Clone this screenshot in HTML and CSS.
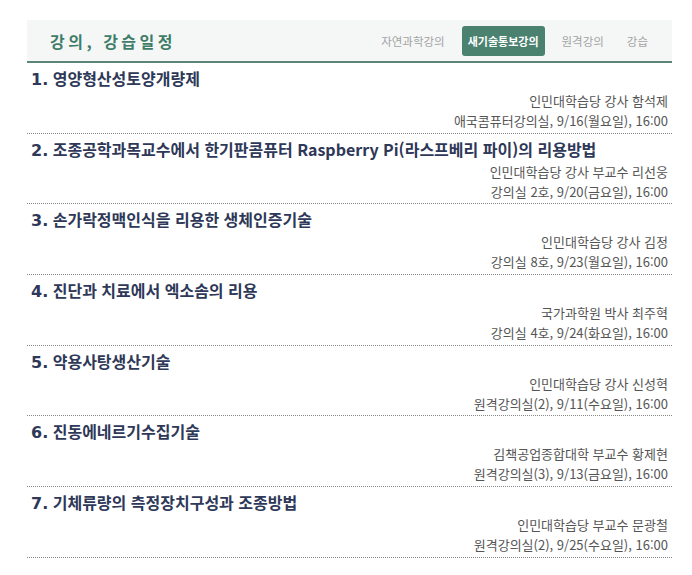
FILE: index.html
```html
<!DOCTYPE html>
<html lang="ko">
<head>
    <meta charset="UTF-8">
    <title>강의, 강습일정</title>
    <link rel="stylesheet" href="styles.css">
</head>
<body>

<div class="schedule">
    <div class="schedule-head">
        <h2>강의, 강습일정</h2>
        <ul class="tabs">
            <li>자연과학강의</li>
            <li class="active">새기술통보강의</li>
            <li>원격강의</li>
            <li>강습</li>
        </ul>
    </div>

    <div class="item">
        <div class="item-title"><b>1.</b> 영양형산성토양개량제</div>
        <div class="item-info">인민대학습당 강사 함석제</div>
        <div class="item-info">애국콤퓨터강의실, 9/16(월요일), 16:00</div>
    </div>
    <div class="item">
        <div class="item-title"><b>2.</b> 조종공학과목교수에서 한기판콤퓨터 Raspberry Pi(라스프베리 파이)의 리용방법</div>
        <div class="item-info">인민대학습당 강사 부교수 리선웅</div>
        <div class="item-info">강의실 2호, 9/20(금요일), 16:00</div>
    </div>
    <div class="item">
        <div class="item-title"><b>3.</b> 손가락정맥인식을 리용한 생체인증기술</div>
        <div class="item-info">인민대학습당 강사 김정</div>
        <div class="item-info">강의실 8호, 9/23(월요일), 16:00</div>
    </div>
    <div class="item">
        <div class="item-title"><b>4.</b> 진단과 치료에서 엑소솜의 리용</div>
        <div class="item-info">국가과학원 박사 최주혁</div>
        <div class="item-info">강의실 4호, 9/24(화요일), 16:00</div>
    </div>
    <div class="item">
        <div class="item-title"><b>5.</b> 약용사탕생산기술</div>
        <div class="item-info">인민대학습당 강사 신성혁</div>
        <div class="item-info">원격강의실(2), 9/11(수요일), 16:00</div>
    </div>
    <div class="item">
        <div class="item-title"><b>6.</b> 진동에네르기수집기술</div>
        <div class="item-info">김책공업종합대학 부교수 황제현</div>
        <div class="item-info">원격강의실(3), 9/13(금요일), 16:00</div>
    </div>
    <div class="item">
        <div class="item-title"><b>7.</b> 기체류량의 측정장치구성과 조종방법</div>
        <div class="item-info">인민대학습당 부교수 문광철</div>
        <div class="item-info">원격강의실(2), 9/25(수요일), 16:00</div>
    </div>
</div>

</body>
</html>
```

FILE: styles.css
```css
body {
    margin: 0;
    font-family: "Noto Sans CJK KR", "DejaVu Sans", sans-serif;
    background-color: #ffffff;
    color: #333;
}
.schedule {
    width: 645px;
    margin: 20px 0 0 27px;
}
.schedule-head {
    display: flex;
    align-items: center;
    justify-content: space-between;
    height: 41px;
    padding: 0 18px 0 23px;
    background-color: #f5f7f7;
    border-bottom: 2px solid #5c8477;
}
.schedule-head h2 {
    margin: 0;
    font-size: 16px;
    letter-spacing: 3.5px;
    color: #3f7d69;
}
.tabs {
    display: flex;
    gap: 11px;
    margin: 0;
    padding: 0;
    list-style: none;
}
.tabs li {
    height: 30px;
    line-height: 30px;
    padding: 0 6px;
    font-size: 11.5px;
    color: #a3a3a3;
    border-radius: 3px;
}
.tabs li.active {
    font-size: 11px;
    background-color: #4b826f;
    color: #ffffff;
    font-weight: bold;
}
.item {
    height: 63.67px;
    padding: 4px 4px 2px 4px;
    border-bottom: 1px dotted #888;
}
.item-title {
    height: 22px;
    font-size: 16px;
    line-height: 22px;
    font-weight: bold;
    color: #2e3858;
    margin-bottom: 2px;
    white-space: nowrap;
}
.item-title b {
    font-family: "DejaVu Sans", sans-serif;
}
.item-info {
    height: 20px;
    font-size: 13px;
    line-height: 20px;
    text-align: right;
    color: #555;
}
```
